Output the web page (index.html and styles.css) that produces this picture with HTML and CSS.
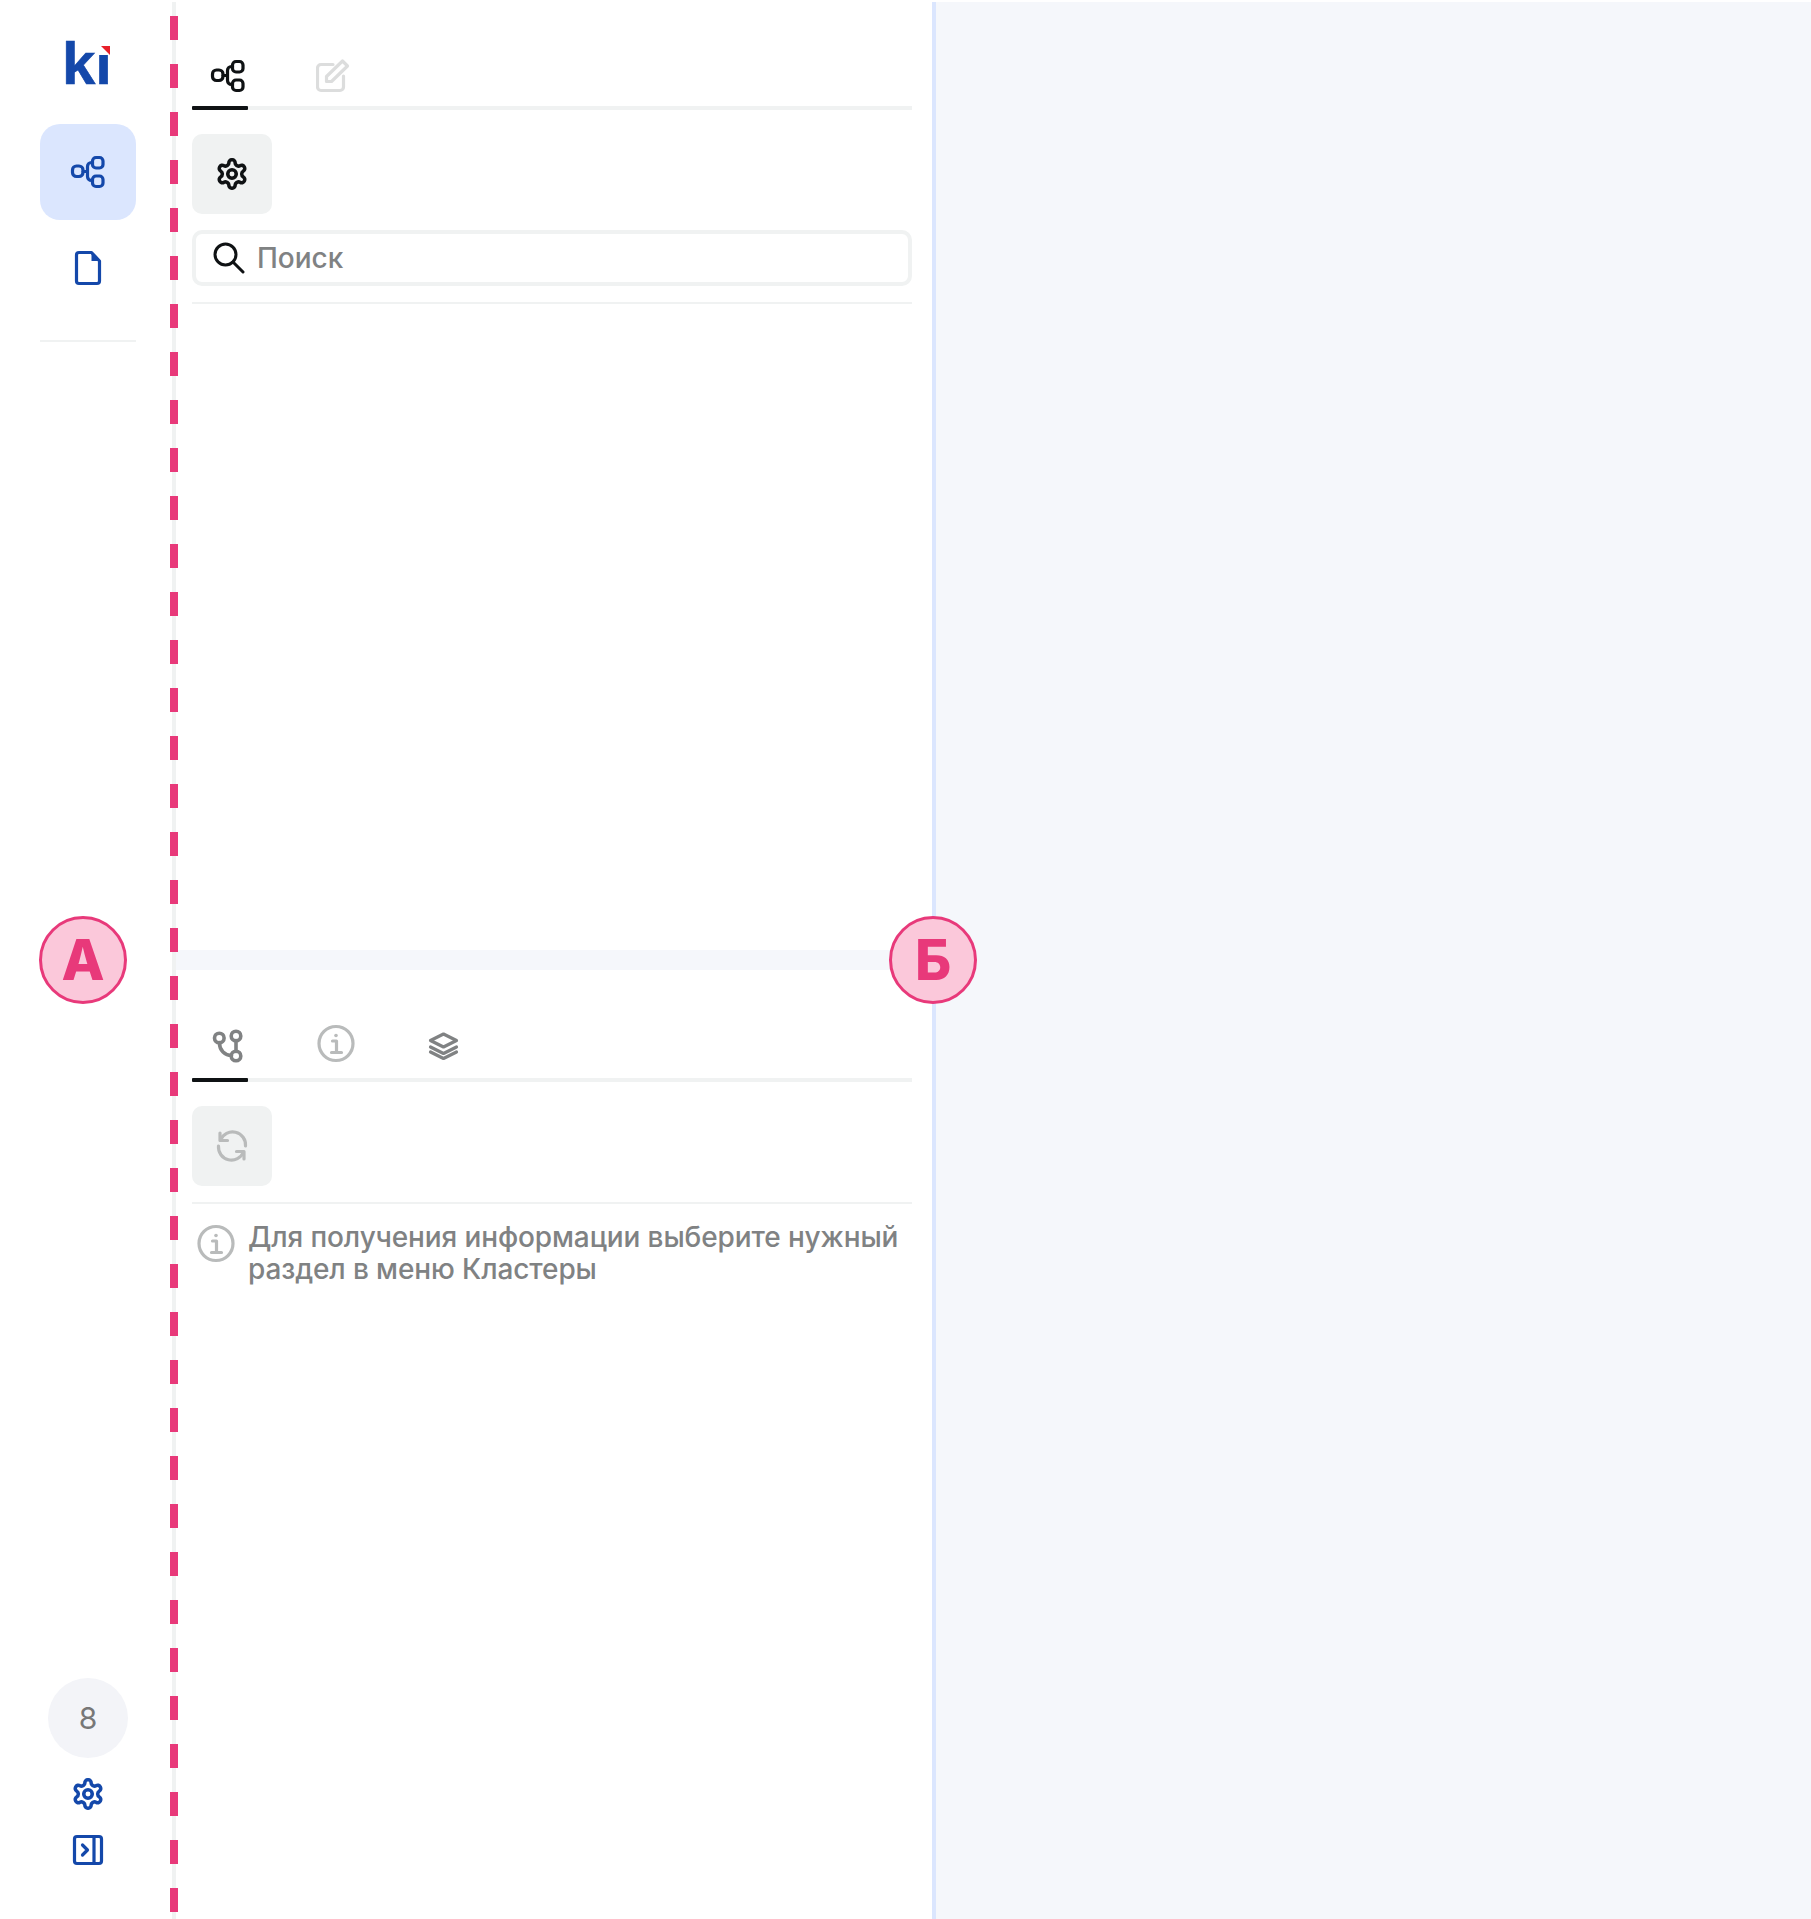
FILE: index.html
```html
<!DOCTYPE html>
<html lang="ru">
<head>
  <meta charset="UTF-8">
  <meta name="viewport" content="width=device-width, initial-scale=1.0">
  <title>Кластеры</title>
  <link rel="stylesheet" href="styles.css">
</head>
<body>

  <!-- Shared icons -->
  <svg class="sprite" xmlns="http://www.w3.org/2000/svg">
    <symbol id="i-net" viewBox="0 0 40 40">
      <rect x="4.5" y="14" width="10.5" height="10.5" rx="4"/>
      <rect x="24.5" y="5.5" width="10.5" height="10.5" rx="3.5"/>
      <rect x="24.5" y="24" width="10.5" height="10.5" rx="3.5"/>
      <path d="M15 19.5h4.5M24.5 10.5h-1a4 4 0 0 0-4 4v10a4 4 0 0 0 4 4h1"/>
    </symbol>
    <symbol id="i-gear" viewBox="0 0 24 24">
      <path d="M12.22 2h-.44a2 2 0 0 0-2 2v.18a2 2 0 0 1-1 1.73l-.43.25a2 2 0 0 1-2 0l-.15-.08a2 2 0 0 0-2.73.73l-.22.38a2 2 0 0 0 .73 2.73l.15.1a2 2 0 0 1 1 1.72v.51a2 2 0 0 1-1 1.74l-.15.09a2 2 0 0 0-.73 2.73l.22.38a2 2 0 0 0 2.73.73l.15-.08a2 2 0 0 1 2 0l.43.25a2 2 0 0 1 1 1.73V20a2 2 0 0 0 2 2h.44a2 2 0 0 0 2-2v-.18a2 2 0 0 1 1-1.73l.43-.25a2 2 0 0 1 2 0l.15.08a2 2 0 0 0 2.73-.73l.22-.39a2 2 0 0 0-.73-2.73l-.15-.08a2 2 0 0 1-1-1.74v-.5a2 2 0 0 1 1-1.74l.15-.09a2 2 0 0 0 .73-2.73l-.22-.38a2 2 0 0 0-2.73-.73l-.15.08a2 2 0 0 1-2 0l-.43-.25a2 2 0 0 1-1-1.73V4a2 2 0 0 0-2-2z"/>
      <circle cx="12" cy="12" r="3"/>
    </symbol>
    <symbol id="i-info" viewBox="0 0 40 40">
      <circle cx="20" cy="19.5" r="17"/>
      <path d="M16.5 17H20.5V28.5M15.5 28.5H25.5"/>
      <circle class="dot" cx="20" cy="11.5" r="1.8"/>
    </symbol>
  </svg>

  <div class="app">

    <!-- Left menu -->
    <aside class="sidebar">
      <div class="logo">
        <span class="logo-text">ki</span>
        <svg class="logo-mark" viewBox="0 0 13 19">
          <rect width="13" height="19" fill="#fff"/>
          <path d="M3 10h9v9z" fill="#e8202a"/>
        </svg>
      </div>

      <nav class="nav">
        <a class="nav-item active"><svg class="icon"><use href="#i-net"/></svg></a>
        <a class="nav-item">
          <svg class="icon" viewBox="0 0 40 40">
            <path d="M11 4.5h12.5l8 8.500v20a2.500 2.500 0 0 1-2.500 2.500H11A2.500 2.500 0 0 1 8.500 33V7A2.500 2.500 0 0 1 11 4.500z"/>
            <path class="solid" d="M23.5 5v8h7.500z"/>
          </svg>
        </a>
      </nav>
      <div class="sidebar-line"></div>

      <div class="sidebar-footer">
        <div class="counter">8</div>
        <svg class="icon"><use href="#i-gear" x="3" y="3" width="34" height="34"/></svg>
        <svg class="icon" viewBox="0 0 40 40">
          <rect x="6.5" y="6.5" width="27" height="27" rx="2.5"/>
          <path d="M26 6.500v27M14.500 15l5 5-5 5"/>
        </svg>
      </div>
    </aside>

    <!-- Clusters panel -->
    <main class="panel">
      <section class="panel-top">
        <div class="tabs">
          <div class="tab active"><svg class="icon"><use href="#i-net"/></svg></div>
          <div class="tab light">
            <svg class="icon" viewBox="0 0 40 40">
              <path d="M17 8.500H5A3.500 3.500 0 0 0 1.500 12v19A3.500 3.500 0 0 0 5 34.500h19a3.500 3.500 0 0 0 3.500-3.500V20"/>
              <path d="M10.500 25.500v-5L26.500 5l5 5-16 15.500z"/>
            </svg>
          </div>
        </div>
        <div class="toolbar">
          <button class="tool-btn" type="button"><svg class="icon"><use href="#i-gear" x="3" y="3" width="34" height="34"/></svg></button>
        </div>
        <label class="search">
          <svg class="search-icon" viewBox="0 0 32 32">
            <circle cx="12.500" cy="12.500" r="10.500"/>
            <path d="M20 20l10 10"/>
          </svg>
          <input class="search-input" type="text" placeholder="Поиск" />
        </label>
        <div class="line"></div>
      </section>

      <div class="resizer"></div>

      <section class="panel-bottom">
        <div class="tabs tabs-low">
          <div class="tab active gray">
            <svg class="icon icon-fork" viewBox="0 0 40 40">
              <circle cx="11.300" cy="14" r="4.800"/>
              <circle cx="28" cy="12" r="4.800"/>
              <circle cx="28" cy="32" r="4.800"/>
              <path d="M28 16.500v11M11.500 18.500v1a12 12 0 0 0 12 12"/>
            </svg>
          </div>
          <div class="tab soft"><svg class="icon"><use href="#i-info"/></svg></div>
          <div class="tab gray">
            <svg class="icon" viewBox="0 0 40 40">
              <path d="M19.500 10l13 6.500-13 6.500-13-6.500z"/>
              <path d="M6.500 23l13 6.500 13-6.500M6.500 28l13 6.500 13-6.500"/>
            </svg>
          </div>
        </div>
        <div class="toolbar">
          <button class="tool-btn soft" type="button">
            <svg class="icon" viewBox="0 0 40 40">
              <path d="M8.500 14A13 13 0 0 1 33.500 20M6.500 20A13 13 0 0 0 31.500 26"/>
              <path d="M8 7v7.500h7.500M32 33v-7.500h-7.500"/>
            </svg>
          </button>
        </div>
        <div class="line"></div>
        <div class="message">
          <svg class="icon soft"><use href="#i-info"/></svg>
          <p>Для получения информации выберите нужный раздел в меню Кластеры</p>
        </div>
      </section>
    </main>

    <!-- Content area -->
    <div class="content"></div>
  </div>

  <!-- Annotations over the screenshot -->
  <div class="dashes"></div>
  <div class="badge badge-a">А</div>
  <div class="badge badge-b">Б</div>

</body>
</html>
```

FILE: styles.css
```css
* {
  box-sizing: border-box;
}

body {
  position: relative;
  margin: 0;
  height: 1919px;
  overflow: hidden;
  background-color: #fff;
  color: #0f1214;
  font-family: "Inter", "Liberation Sans", sans-serif;
}

.sprite {
  display: none;
}

.icon {
  display: block;
  width: 40px;
  height: 40px;
  flex: none;
  fill: none;
  stroke: currentColor;
  stroke-width: 3.2;
  stroke-linecap: round;
  stroke-linejoin: round;
}

.icon-fork {
  stroke-width: 3.6;
}

#i-gear {
  stroke-width: 2.5;
}

.solid {
  fill: currentColor;
  stroke: none;
}

.dot {
  fill: currentColor;
  stroke: none;
}

.app {
  display: flex;
  margin-top: 2px;
  height: 1917px;
}

/* Left menu */
.sidebar {
  display: flex;
  flex-direction: column;
  width: 172px;
  flex: none;
  padding: 40px 36px 49px 40px;
  color: #1448aa;
}

.logo {
  position: relative;
  height: 42px;
  font-family: "Liberation Sans", sans-serif;
}

.logo-text {
  display: block;
  margin-left: 22px;
  font-size: 60px;
  font-weight: 700;
  line-height: 44px;
  color: #1448aa;
  -webkit-text-stroke: 0.6px #1448aa;
}

.logo-mark {
  position: absolute;
  left: 58px;
  top: -6px;
  width: 13px;
  height: 19px;
}

.nav {
  display: flex;
  flex-direction: column;
  margin-top: 40px;
}

.nav-item {
  display: flex;
  align-items: center;
  justify-content: center;
  width: 96px;
  height: 96px;
  border-radius: 20px;
}

.nav-item.active {
  background-color: #dbe6fe;
}

.sidebar-line {
  height: 2px;
  margin-top: 24px;
  background-color: #f0f2f2;
}

.sidebar-footer {
  display: flex;
  flex-direction: column;
  align-items: center;
  gap: 16px;
  margin-top: auto;
}

.counter {
  width: 80px;
  height: 80px;
  border-radius: 50%;
  background-color: #f3f4f8;
  color: #777;
  font-size: 30px;
  line-height: 80px;
  text-align: center;
}

/* Clusters panel */
.panel {
  display: flex;
  flex-direction: column;
  width: 764px;
  flex: none;
  border-left: 4px solid #f0f2f2;
  border-right: 4px solid #dbe6fe;
}

.panel-top {
  height: 948px;
  flex: none;
  padding: 54px 20px 0 16px;
}

.panel-bottom {
  flex: 1;
  padding: 54px 20px 0 16px;
}

.resizer {
  height: 20px;
  flex: none;
  background-color: #f5f7fb;
}

.tabs {
  display: flex;
  gap: 52px;
  padding-bottom: 10px;
  position: relative;
  border-bottom: 4px solid #f0f2f2;
}

.tabs-low {
  padding-bottom: 14px;
}

.tab {
  position: relative;
  padding-left: 16px;
  color: #0f1214;
}

.tab.active::after {
  content: "";
  position: absolute;
  left: 0;
  right: 0;
  bottom: -14px;
  height: 4px;
  border-radius: 1px;
  background-color: #0f1214;
}

.tabs-low .tab.active::after {
  bottom: -18px;
}

.tab.light {
  color: #dcdddd;
}

.tab.gray {
  color: #808283;
}

.soft {
  color: #b9bbbb;
}

.tab.soft {
  color: #b9bbbb;
}

.toolbar {
  padding: 24px 0 16px;
}

.tool-btn {
  display: flex;
  align-items: center;
  justify-content: center;
  width: 80px;
  height: 80px;
  padding: 0;
  border: none;
  border-radius: 10px;
  background-color: #f0f2f2;
  color: #0f1214;
}

.tool-btn.soft {
  color: #b9bbbb;
}

.search {
  display: flex;
  align-items: center;
  gap: 12px;
  height: 56px;
  margin-bottom: 16px;
  padding-left: 17px;
  border: 4px solid #f0f2f2;
  border-radius: 10px;
}

.search-icon {
  width: 32px;
  height: 32px;
  flex: none;
  fill: none;
  stroke: #0f1214;
  stroke-width: 3;
  stroke-linecap: round;
}

.search-input {
  flex: 1;
  min-width: 0;
  padding: 0;
  border: none;
  outline: none;
  background: none;
  font-family: inherit;
  font-size: 28px;
  font-weight: 450;
}

.search-input::placeholder {
  color: #808283;
  opacity: 1;
}

.line {
  height: 2px;
  background-color: #f0f2f2;
}

.message {
  display: flex;
  gap: 12px;
  padding: 17px 0 0 4px;
}

.message .icon {
  margin-top: 3px;
}

.message p {
  margin: 0;
  color: #808283;
  font-size: 28px;
  font-weight: 450;
  line-height: 32px;
  letter-spacing: -0.12px;
}

.content {
  flex: 1;
  background-color: #f5f7fb;
}

/* Annotations */
.dashes {
  position: absolute;
  left: 170px;
  top: 16px;
  width: 8px;
  height: 1896px;
  background: repeating-linear-gradient(to bottom, #e8397a 0 24px, transparent 24px 48px);
}

.badge {
  position: absolute;
  top: 916px;
  width: 88px;
  height: 88px;
  border: 3px solid #e8397a;
  border-radius: 50%;
  background-color: #fbc8da;
  color: #e8397a;
  font-size: 56px;
  font-weight: 800;
  line-height: 82px;
  text-align: center;
}

.badge-a {
  left: 39px;
}

.badge-b {
  left: 889px;
}
```
